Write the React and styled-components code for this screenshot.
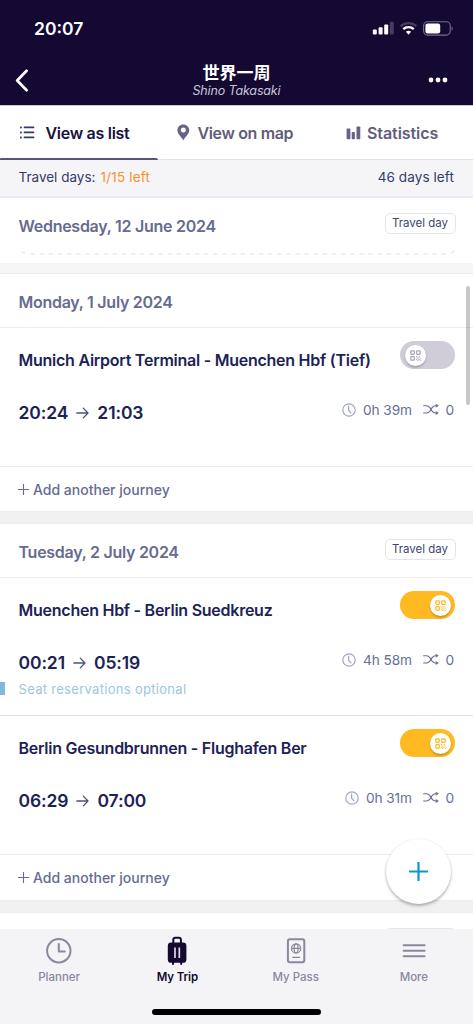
import React, { useState } from 'react';
import styled, { createGlobalStyle } from 'styled-components';

const GlobalStyle = createGlobalStyle`
  * {
    box-sizing: border-box;
  }

  body {
    margin: 0;
    background: #f0f0f1;
    font-family: Inter, 'Noto Sans CJK JP', sans-serif;
  }

  svg {
    display: block;
    flex: none;
  }
`;

const Screen = styled.div`
  position: relative;
  display: flex;
  flex-direction: column;
  width: 473px;
  height: 1024px;
  overflow: hidden;
`;

const Header = styled.header`
  flex: none;
  height: 106px;
  background: #140933;
  border-bottom: 1px solid #cbc8d6;
  color: #fff;
`;

const StatusBar = styled.div`
  display: flex;
  justify-content: space-between;
  align-items: center;
  height: 57px;
  padding: 0 19px 0 34px;
`;

const Clock = styled.span`
  font-size: 17.5px;
  font-weight: 600;
`;

const TitleBar = styled.div`
  display: grid;
  grid-template-columns: 60px 1fr 60px;
  height: 48px;
`;

const IconButton = styled.button`
  display: flex;
  align-items: center;
  justify-content: ${(p) => (p.$end ? 'flex-end' : 'flex-start')};
  padding: ${(p) => (p.$end ? '0 25px 2px 0' : '0 0 1px 15px')};
  border: 0;
  background: none;
  color: #fff;
  cursor: pointer;
`;

const TripTitle = styled.div`
  display: flex;
  flex-direction: column;
  align-items: center;
  padding-top: 6px;
`;

const TripName = styled.h1`
  margin: 0;
  font-size: 17px;
  line-height: 20px;
  font-weight: 700;
`;

const Traveller = styled.span`
  margin-top: 1px;
  font-size: 12.5px;
  line-height: 14px;
  font-style: italic;
  letter-spacing: -0.15px;
  color: #c9c5d6;
`;

const Tabs = styled.nav`
  flex: none;
  display: grid;
  grid-template-columns: 157.5px 157.5px 158px;
  height: 54px;
  background: #fff;
  border-bottom: 1px solid #e3e2ea;
`;

const Tab = styled.button`
  position: relative;
  display: flex;
  align-items: center;
  gap: ${(p) => p.$gap}px;
  padding: 0 0 0 ${(p) => p.$inset}px;
  border: 0;
  background: none;
  font-family: inherit;
  font-size: 16px;
  font-weight: 600;
  letter-spacing: ${(p) => p.$spacing}px;
  white-space: nowrap;
  color: ${(p) => (p.$active ? '#1a1140' : '#5f5c7c')};
  cursor: pointer;

  &::after {
    content: '';
    display: ${(p) => (p.$active ? 'block' : 'none')};
    position: absolute;
    left: 0;
    right: 0;
    bottom: -1px;
    height: 2px;
    border-radius: 1px 2px 0 0;
    background: #57547a;
  }
`;

const Summary = styled.div`
  flex: none;
  display: flex;
  justify-content: space-between;
  align-items: center;
  height: 38px;
  padding: 0 19px 2px 18.5px;
  background: #f5f5f8;
  border-bottom: 2px solid #ebebf1;
  font-size: 13.5px;
  color: #343a69;
`;

const Left = styled.span`
  margin-left: 5px;
  letter-spacing: 0.2px;
  color: #f5912d;
`;

const DaysLeft = styled.span`
  letter-spacing: 0.1px;
`;

const List = styled.main`
  flex: 1;
  min-height: 0;
  overflow: hidden;
`;

const Day = styled.section`
  height: ${(p) => (p.$height ? `${p.$height}px` : 'auto')};
  background: #fff;
`;

const Gap = styled.div`
  height: ${(p) => p.$height}px;
  background: ${(p) => (p.$light ? '#f6f6f8' : '#f0f0f1')};
  border-top: 1px solid ${(p) => (p.$light ? '#f6f6f8' : '#ececf2')};
  border-bottom: 1px solid #ebebf2;
`;

const DayHeader = styled.div`
  display: flex;
  justify-content: space-between;
  align-items: flex-start;
  height: ${(p) => (p.$dashed ? 65 : 54)}px;
  padding: 15px 17.5px 0 18.5px;
  border-bottom: ${(p) => (p.$dashed ? '0' : '1px solid #efeff3')};
`;

const DayTitle = styled.h2`
  margin: 0.5px 0 0;
  font-size: 16px;
  line-height: 24px;
  font-weight: 600;
  letter-spacing: -0.27px;
  color: #666b91;
`;

const Badge = styled.span`
  width: 71px;
  height: 21px;
  border: 1px solid #e4e5ee;
  border-radius: 5px;
  font-size: 11.5px;
  line-height: 19px;
  text-align: center;
  color: #40466f;
`;

const Dashes = styled.svg`
  margin: -13.5px 0 0 18px;
`;

const Journey = styled.article`
  height: ${(p) => p.$height}px;
  padding: 13px 18px 0 18.5px;
  border-bottom: 1px solid ${(p) => (p.$last ? '#e8e8f1' : '#e2e2e6')};
`;

const Row = styled.div`
  display: flex;
  justify-content: space-between;
`;

const Route = styled.h3`
  margin: 8px 0 0;
  font-size: 16px;
  line-height: 22px;
  font-weight: 600;
  letter-spacing: -0.25px;
  white-space: nowrap;
  color: #1c2256;
`;

const Switch = styled.button`
  display: flex;
  align-items: flex-start;
  justify-content: ${(p) => (p.$on ? 'flex-end' : 'flex-start')};
  width: 55px;
  height: 28px;
  padding: 3.5px 4.5px;
  border: 0;
  border-radius: 14px;
  background: ${(p) => (p.$on ? '#ffba22' : '#d0cdd8')};
  cursor: pointer;
`;

const Knob = styled.span`
  display: flex;
  align-items: center;
  justify-content: center;
  width: 21px;
  height: 21px;
  border-radius: 50%;
  background: #fff;
  box-shadow: 0 1.5px 2px rgba(60, 50, 40, 0.3);
  color: ${(p) => (p.$on ? '#ffba22' : '#a8a6b8')};
`;

const Times = styled.div`
  display: flex;
  align-items: center;
  gap: 8px;
  margin-top: 29.5px;
  height: 24px;
  font-size: 17.5px;
  font-weight: 600;
  letter-spacing: -0.1px;
  color: #1c2256;
`;

const Meta = styled.div`
  display: flex;
  align-items: center;
  height: 24px;
  margin: 26.5px 1px 0 0;
  font-size: 13.7px;
  letter-spacing: -0.1px;
  color: #696e95;
`;

const Duration = styled.span`
  margin: 0 11px 0 7px;
`;

const Changes = styled.span`
  margin-left: 6.5px;
`;

const Note = styled.p`
  position: relative;
  margin: 4.5px 0 0;
  font-size: 13px;
  line-height: 20px;
  letter-spacing: 0.3px;
  color: #9bc7e3;

  &::before {
    content: '';
    position: absolute;
    left: -18.5px;
    top: 3px;
    width: 4.5px;
    height: 12.5px;
    background: #83b8dd;
  }
`;

const AddJourney = styled.button`
  display: flex;
  align-items: center;
  gap: 4px;
  width: 100%;
  height: ${(p) => p.$height}px;
  padding: 0 0 0 18px;
  border: 0;
  background: none;
  font-family: inherit;
  font-size: 14px;
  font-weight: 500;
  color: #666b91;
  cursor: pointer;
`;

const ScrollThumb = styled.div`
  position: absolute;
  top: 286px;
  right: 3px;
  width: 4px;
  height: 119px;
  border-radius: 2px;
  background: rgba(0, 0, 0, 0.22);
`;

const Fab = styled.button`
  position: absolute;
  right: 22.5px;
  bottom: 120px;
  display: flex;
  align-items: center;
  justify-content: center;
  width: 65px;
  height: 65px;
  padding: 0;
  border: 0;
  border-radius: 50%;
  background: #fff;
  box-shadow: 0 2px 3px rgba(0, 0, 0, 0.28), 0 0 2px rgba(0, 0, 0, 0.08);
  color: #0c98c6;
  cursor: pointer;
`;

const BottomNav = styled.footer`
  flex: none;
  height: 95px;
  background: #f4f4f7;
`;

const NavItems = styled.div`
  display: grid;
  grid-template-columns: repeat(4, 1fr);
  height: 80px;
`;

const NavItem = styled.button`
  display: flex;
  flex-direction: column;
  align-items: center;
  gap: 4px;
  padding: 7px 0 0;
  border: 0;
  background: none;
  font-family: inherit;
  font-size: 11.5px;
  line-height: 14px;
  font-weight: ${(p) => (p.$active ? 600 : 500)};
  letter-spacing: ${(p) => (p.$active ? '-0.1px' : 'normal')};
  color: ${(p) => (p.$active ? '#140933' : '#8a879e')};
  cursor: pointer;
`;

const HomeIndicator = styled.div`
  width: 169px;
  height: 6px;
  margin: 0 auto;
  border-radius: 3px;
  background: #000;
`;

const SignalIcon = () => (
  <svg width="82" height="16" viewBox="0 0 82 16" fill="none">
    <rect x="0.8" y="8.6" width="4" height="5" rx="1" fill="#fff" />
    <rect x="6.6" y="6.2" width="4" height="7.4" rx="1" fill="#fff" />
    <rect x="12.2" y="3.4" width="4" height="10.2" rx="1" fill="#fff" />
    <rect x="17.8" y="0.8" width="4" height="12.8" rx="1" fill="#463d60" />
    <path d="M28.6 5.2a11.6 11.6 0 0 1 15.8 0" stroke="#463d60" strokeWidth="2.4" />
    <path d="M31.2 8.2a7.8 7.8 0 0 1 10.6 0" stroke="#fff" strokeWidth="2.3" />
    <path d="M33.9 10.8a4.2 4.2 0 0 1 5.2 0l-2.6 2.9z" fill="#fff" />
    <rect x="51.6" y="0.7" width="26.6" height="13.4" rx="4" stroke="#756e88" strokeWidth="1.1" />
    <rect x="53.4" y="2.4" width="14.8" height="10" rx="2.2" fill="#fff" />
    <path d="M79.6 5.2c1.6.8 1.6 3.6 0 4.4z" fill="#756e88" />
  </svg>
);

const BackIcon = () => (
  <svg width="14" height="23" viewBox="0 0 14 23" fill="none" stroke="currentColor" strokeWidth="2.7" strokeLinecap="round" strokeLinejoin="round">
    <path d="M11.6 1.8 2.2 11.5l9.4 9.7" />
  </svg>
);

const DotsIcon = () => (
  <svg width="20" height="6" viewBox="0 0 20 6" fill="currentColor">
    <circle cx="3" cy="3" r="2.4" />
    <circle cx="10" cy="3" r="2.4" />
    <circle cx="17" cy="3" r="2.4" />
  </svg>
);

const ListIcon = () => (
  <svg width="15" height="13" viewBox="0 0 15 13" fill="#343a6b">
    <rect x="0" y="0.6" width="1.8" height="1.8" rx="0.6" />
    <rect x="0" y="5.6" width="1.8" height="1.8" rx="0.6" />
    <rect x="0" y="10.6" width="1.8" height="1.8" rx="0.6" />
    <rect x="3.7" y="0.6" width="10.6" height="1.7" rx="0.6" />
    <rect x="3.7" y="5.6" width="10.6" height="1.7" rx="0.6" />
    <rect x="3.7" y="10.6" width="10.6" height="1.7" rx="0.6" />
  </svg>
);

const PinIcon = () => (
  <svg width="13" height="17" viewBox="0 0 13 17" fill="#666388">
    <path
      fillRule="evenodd"
      d="M6.3.4C3 .4.4 2.900.4 6.200c0 4 4.700 7.400 5.900 10.200 1.200-2.800 5.900-6.200 5.900-10.200C12.200 2.900 9.600.4 6.300.4zm0 3.200a2.500 2.500 0 1 1 0 5 2.500 2.500 0 0 1 0-5z"
    />
  </svg>
);

const StatsIcon = () => (
  <svg width="15" height="14" viewBox="0 0 15 14" fill="#666388">
    <rect x="0.6" y="2.6" width="3.8" height="10.6" rx="0.8" />
    <rect x="5.7" y="6" width="3.2" height="7.2" rx="0.8" />
    <rect x="10.5" y="0.6" width="3.8" height="12.6" rx="0.8" />
  </svg>
);

const ArrowIcon = () => (
  <svg width="13" height="12" viewBox="0 0 13 12" fill="none" stroke="#4c527e" strokeWidth="1.3" strokeLinecap="round" strokeLinejoin="round">
    <path d="M0.8 6h11M7.3 1.1 12 6l-4.7 4.9" />
  </svg>
);

const ClockIcon = () => (
  <svg width="14" height="14" viewBox="0 0 14 14" fill="none" stroke="#a3a6c2" strokeWidth="1.2" strokeLinecap="round">
    <circle cx="7" cy="7" r="6.2" />
    <path d="M6.6 3.2v4l2.3 2.7" />
  </svg>
);

const ShuffleIcon = () => (
  <svg width="16" height="11" viewBox="0 0 16 11" fill="none" stroke="#696e95" strokeWidth="1.1" strokeLinecap="round" strokeLinejoin="round">
    <path d="M0.6 1.7h3c1.5 0 2.300.7 3.300 1.900l2.200 3.500c1 1.300 1.800 1.900 3.200 1.900h2" />
    <path d="M0.6 9h3c1.5 0 2.300-.6 3.300-1.900l2.200-3.500c1-1.200 1.800-1.900 3.200-1.900h2" />
    <path d="M13.2.3 15.4 1.7l-2.2 1.4zM13.2 7.6l2.2 1.4-2.2 1.4z" fill="#696e95" strokeWidth="0.5" />
  </svg>
);

const QrIcon = () => (
  <svg width="11" height="11" viewBox="0 0 11 11" fill="none" stroke="currentColor" strokeWidth="1.2">
    <rect x="0.8" y="0.8" width="3.5" height="3.5" rx="0.5" />
    <rect x="6.7" y="0.8" width="3.5" height="3.5" rx="0.5" />
    <rect x="0.8" y="6.7" width="3.5" height="3.5" rx="0.5" />
    <path d="M6 6.7h1.3M8.7 6.7H10M7.3 8h1.4M9.7 8.2h1.1M6 9.2h1.3M8.5 9.5h1.2M7.2 10.4h1.2M9.9 10.4h1" strokeWidth="1" />
  </svg>
);

const PlusIcon = ({ size, width }) => (
  <svg width={size} height={size} viewBox={`0 0 ${size} ${size}`} fill="none" stroke="currentColor" strokeWidth={width}>
    <path d={`M${size / 2} 0v${size}M0 ${size / 2}h${size}`} />
  </svg>
);

const PlannerIcon = () => (
  <svg width="30" height="30" viewBox="0 0 30 30" fill="none" stroke="currentColor" strokeWidth="2" strokeLinecap="round" strokeLinejoin="round">
    <circle cx="14.8" cy="14.8" r="11.7" />
    <path d="M14.8 8v7.5h6" />
  </svg>
);

const TripIcon = () => (
  <svg width="30" height="30" viewBox="0 0 30 30" fill="none">
    <path d="M11.3 8V3.8c0-1.300.7-2 2-2h3.600c1.300 0 2 .7 2 2V8" stroke="currentColor" strokeWidth="2" />
    <rect x="5.8" y="6.4" width="18.6" height="20.4" rx="3.4" fill="currentColor" />
    <path d="M11 25v3M19.2 25v3" stroke="currentColor" strokeWidth="2" strokeLinecap="round" />
    <path d="M13 11.5v10.4M17.3 11.5v10.4" stroke="#dcdae4" strokeWidth="1.7" />
  </svg>
);

const PassIcon = () => (
  <svg width="30" height="30" viewBox="0 0 30 30" fill="none" stroke="currentColor" strokeWidth="2">
    <rect x="6.9" y="3.3" width="16.4" height="23" rx="2" />
    <g strokeWidth="1.2">
      <circle cx="15.1" cy="12.4" r="4.6" />
      <ellipse cx="15.1" cy="12.4" rx="2" ry="4.6" />
      <path d="M10.5 12.4h9.2M11.2 21.4h7.8" />
    </g>
  </svg>
);

const MoreIcon = () => (
  <svg width="30" height="30" viewBox="0 0 30 30" fill="none" stroke="currentColor" strokeWidth="2" strokeLinecap="round">
    <path d="M4.6 9.2h21M4.6 14.7h21M4.6 20.3h21" />
  </svg>
);

const JourneyItem = ({ route, from, to, duration, note, last, height, active }) => {
  const [on, setOn] = useState(active);

  return (
    <Journey $last={last} $height={height}>
      <Row>
        <Route>{route}</Route>
        <Switch $on={on} onClick={() => setOn(!on)}>
          <Knob $on={on}>
            <QrIcon />
          </Knob>
        </Switch>
      </Row>
      <Row>
        <Times>
          <span>{from}</span>
          <ArrowIcon />
          <span>{to}</span>
        </Times>
        <Meta>
          <ClockIcon />
          <Duration>{duration}</Duration>
          <ShuffleIcon />
          <Changes>0</Changes>
        </Meta>
      </Row>
      {note && <Note>{note}</Note>}
    </Journey>
  );
};

const AddButton = ({ height }) => (
  <AddJourney $height={height}>
    <PlusIcon size={11} width={1.1} />
    Add another journey
  </AddJourney>
);

const navItems = [
  { label: 'Planner', Icon: PlannerIcon },
  { label: 'My Trip', Icon: TripIcon },
  { label: 'My Pass', Icon: PassIcon },
  { label: 'More', Icon: MoreIcon },
];

const App = () => {
  const [page, setPage] = useState('My Trip');

  return (
    <Screen>
      <GlobalStyle />
      <Header>
        <StatusBar>
          <Clock>20:07</Clock>
          <SignalIcon />
        </StatusBar>
        <TitleBar>
          <IconButton aria-label="Back">
            <BackIcon />
          </IconButton>
          <TripTitle>
            <TripName>世界一周</TripName>
            <Traveller>Shino Takasaki</Traveller>
          </TripTitle>
          <IconButton $end aria-label="Options">
            <DotsIcon />
          </IconButton>
        </TitleBar>
      </Header>
      <Tabs>
        <Tab $active $inset={20} $gap={10.5} $spacing={-0.28}>
          <ListIcon />
          View as list
        </Tab>
        <Tab $inset={19.5} $gap={7.5} $spacing={-0.36}>
          <PinIcon />
          View on map
        </Tab>
        <Tab $inset={31} $gap={6} $spacing={-0.08}>
          <StatsIcon />
          Statistics
        </Tab>
      </Tabs>
      <Summary>
        <span>
          Travel days:
          <Left>1/15 left</Left>
        </span>
        <DaysLeft>46 days left</DaysLeft>
      </Summary>
      <List>
        <Day $height={65}>
          <DayHeader $dashed>
            <DayTitle>Wednesday, 12 June 2024</DayTitle>
            <Badge>Travel day</Badge>
          </DayHeader>
          <Dashes width="440" height="8" viewBox="0 0 440 8" fill="none">
            <path d="M3 1.5q1.5 1.5 4 1.5" stroke="#dfdfe9" />
            <path d="M12.5 4H430" stroke="#ececf0" strokeWidth="1.5" strokeDasharray="4.5 4.63" />
            <path d="M433 3.5l3-2.5" stroke="#d5d5e0" />
          </Dashes>
        </Day>
        <Gap $light $height={11} />
        <Day>
          <DayHeader>
            <DayTitle>Monday, 1 July 2024</DayTitle>
          </DayHeader>
          <JourneyItem
            route="Munich Airport Terminal - Muenchen Hbf (Tief)"
            from="20:24"
            to="21:03"
            duration="0h 39m"
            height={139}
            active={false}
            last
          />
          <AddButton height={44} />
        </Day>
        <Gap $height={13} />
        <Day>
          <DayHeader>
            <DayTitle>Tuesday, 2 July 2024</DayTitle>
            <Badge>Travel day</Badge>
          </DayHeader>
          <JourneyItem
            route="Muenchen Hbf - Berlin Suedkreuz"
            from="00:21"
            to="05:19"
            duration="4h 58m"
            note="Seat reservations optional"
            height={138.4}
            active
          />
          <JourneyItem
            route="Berlin Gesundbrunnen - Flughafen Ber"
            from="06:29"
            to="07:00"
            duration="0h 31m"
            height={138.6}
            active
            last
          />
          <AddButton height={45} />
        </Day>
        <Gap $height={13} />
        <Day>
          <DayHeader>
            <span />
            <Badge />
          </DayHeader>
        </Day>
      </List>
      <BottomNav>
        <NavItems>
          {navItems.map(({ label, Icon }) => (
            <NavItem key={label} $active={page === label} onClick={() => setPage(label)}>
              <Icon />
              {label}
            </NavItem>
          ))}
        </NavItems>
        <HomeIndicator />
      </BottomNav>
      <ScrollThumb />
      <Fab aria-label="Add">
        <PlusIcon size={19} width={2.2} />
      </Fab>
    </Screen>
  );
};

export default App;
